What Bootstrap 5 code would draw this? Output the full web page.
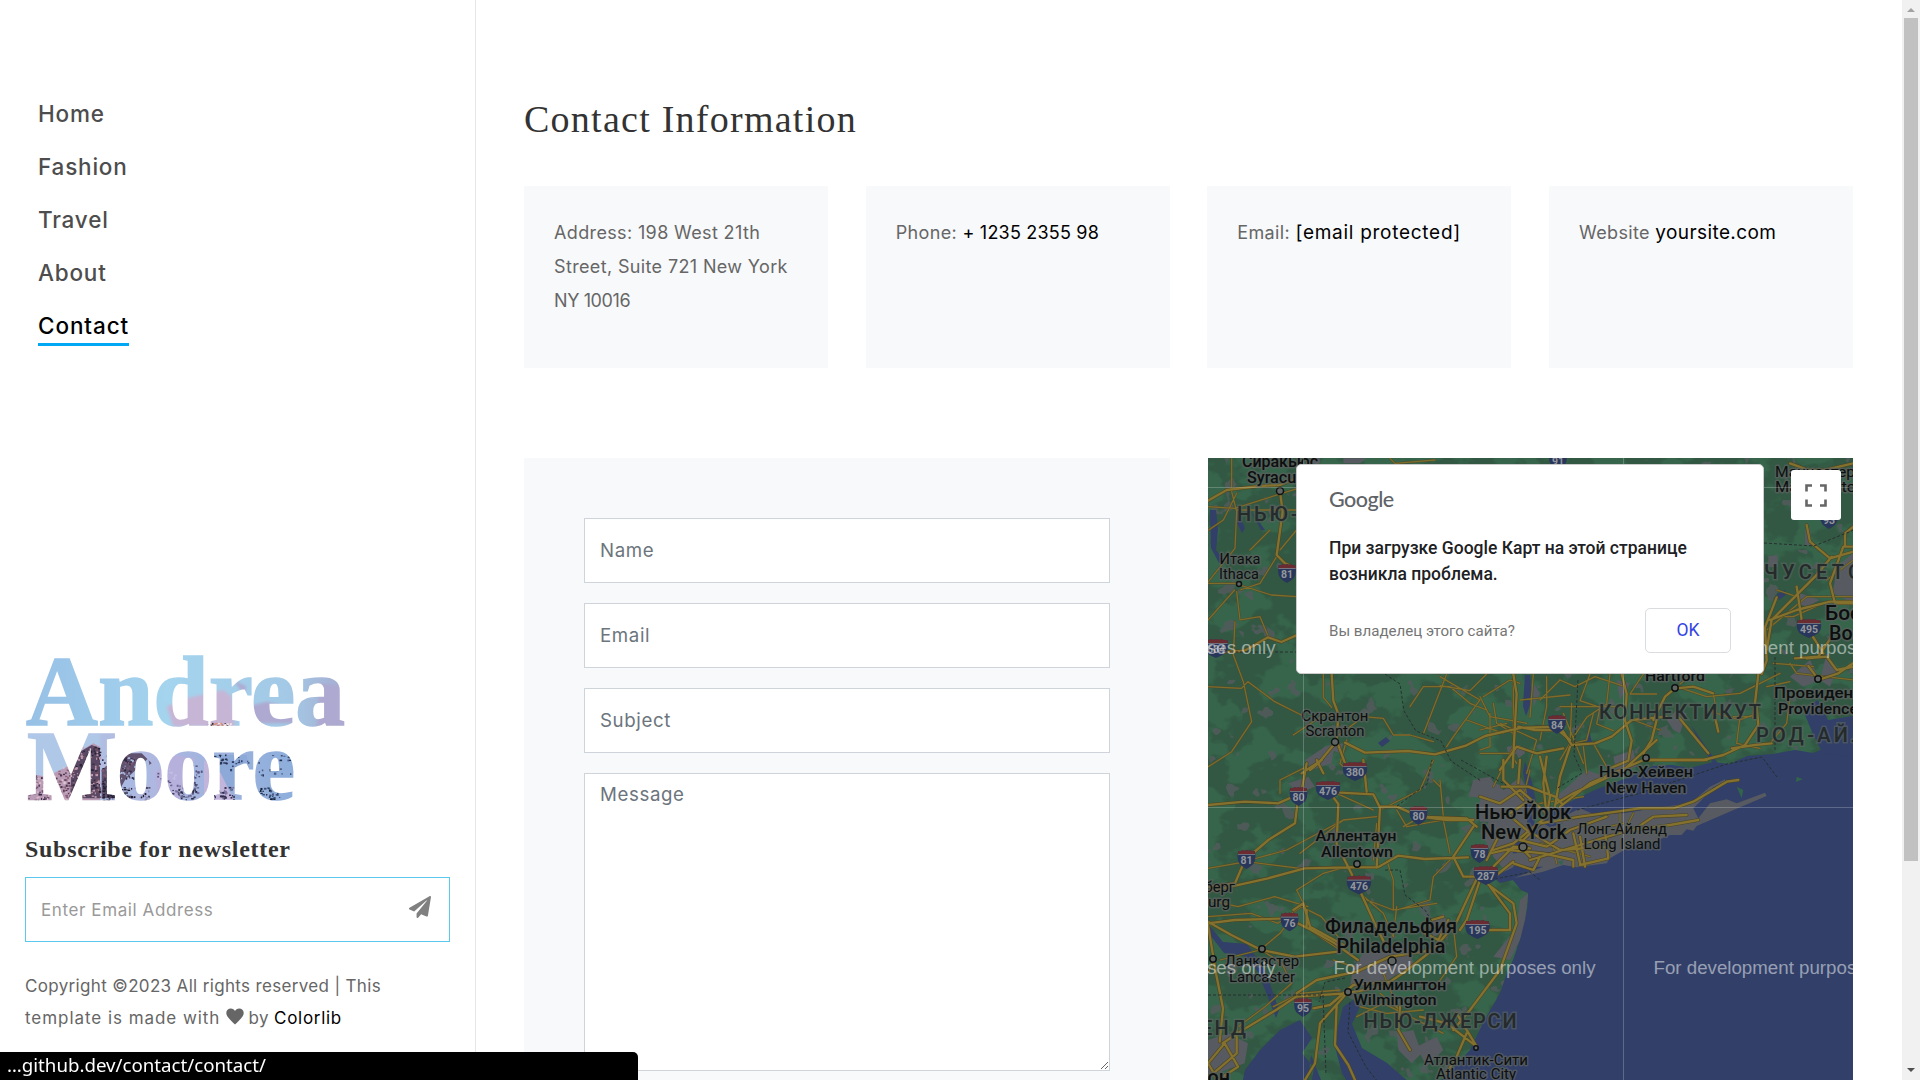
<!DOCTYPE html>
<html lang="en">
<head>
<meta charset="utf-8">
<meta name="viewport" content="width=device-width, initial-scale=1">
<title>Andrea Moore - Contact</title>
<link href="https://cdn.jsdelivr.net/npm/bootstrap@5.3.0/dist/css/bootstrap.min.css" rel="stylesheet">
<style>
body{font-family:Inter,"Liberation Sans",sans-serif;color:#666;font-size:18px;line-height:34px;background:#fff}
a{text-decoration:none;color:#000}
.side{width:476px;border-right:1px solid #e6e6e6;padding-top:87px}
.side-nav{padding-left:38px}
.side-nav li{height:53px}
.side-nav a{font-size:22.5px;letter-spacing:.8px;font-weight:500;color:#4d4d4d;line-height:53px;display:block;width:max-content}
.side-nav a.active{color:#000;position:relative;letter-spacing:.9px}
.side-nav a.active::after{content:"";position:absolute;left:0;right:0;bottom:6px;height:3px;background:#00a8f3}
.side-foot{margin-top:292px;padding:0 25px}
.logo{display:block;margin-left:-25px}
.logo text{font:700 100px "Liberation Serif",serif}
.news-title{font-family:"Liberation Serif",serif;font-size:24px;color:#333;font-weight:700;line-height:28px;letter-spacing:.7px;margin:1px 0 14px}
.news-box{height:65px;border:1px solid #5bc8ee;font-size:17px;letter-spacing:.6px;color:#999;padding:0 18px 0 15px}
.news-box svg{margin-top:-5px}
.copy{font-size:17px;line-height:32px;letter-spacing:.34px;margin:28px 0 0}
.ls-wide{letter-spacing:.95px}
.ls-mid{letter-spacing:.7px}
.ls-tight{letter-spacing:-.4px}
.page-wrap{padding:96px 49px 0 48px}
.page-title{font-family:"Liberation Serif",serif;color:#333;font-size:38px;line-height:46px;letter-spacing:1.25px;margin:0 0 44px}
.info{background:#f8f9fb;height:182px;padding:30px 30px;letter-spacing:.36px;flex:0 0 304px;white-space:nowrap}
.info a{letter-spacing:.2px}
.info a.ls-wide{font-size:19px;letter-spacing:.72px}
.info a.ls-mid{font-size:19px;letter-spacing:.4px}
.row-info{gap:37.67px;margin-bottom:90px}
.form-panel{background:#f8f9fb;padding:60px;width:646px;height:640px}
.form-panel .form-control{border-radius:0;border:1px solid #ced4da;font-size:18.7px;letter-spacing:.6px;height:65px;padding:6px 15px;margin-bottom:20px;line-height:29px}
.form-panel .form-control::placeholder{color:#6c757d;opacity:1}
.form-panel textarea.form-control{height:298px;margin-bottom:0}
.map-box{width:645px;height:640px;overflow:hidden}
.map-dlg{left:88px;top:6px;width:468px;height:210px;border-radius:5px;background:#fff;padding:19px 32px 0;font-family:Roboto,sans-serif;border:1px solid #ccc}
.g-logo{font-family:Lato,sans-serif;font-weight:500;color:#5f6368;font-size:21.5px;line-height:30px;letter-spacing:-.5px}
.g-msg{font-size:17.5px;font-weight:500;color:#202124;line-height:26px;margin-top:21px;white-space:nowrap}
.g-own{font-size:15.1px;color:#757575}
.g-foot{margin-top:21px}
.g-ok{width:86px;height:45px;border:1px solid #dadce0;border-radius:5px;color:#3244e4;font-size:17.5px;line-height:42px;text-align:center}
.full-btn{left:583px;top:12px;width:50px;height:50px;border-radius:3px;background:#fff}
.sbar{width:18px;background:#f1f1f1}
.sbar i{display:block;background:#c1c1c1;width:14px;height:843px}
.status-bar{width:638px;height:28px;background:#000;color:#fff;border-top-right-radius:5px;font:18.7px/26px "Noto Sans",sans-serif;padding-left:7px}
.map-box svg text{font-family:Roboto,sans-serif;text-anchor:middle}
.city{fill:#0d0f0f;stroke:#5a605f;stroke-opacity:.75;stroke-width:3px;paint-order:stroke;stroke-linejoin:round;font-weight:500}
.town{font-weight:400}
.state{fill:#252a2a;stroke:#5a6561;stroke-opacity:.6;stroke-width:3px;paint-order:stroke;font-weight:500}
.map-box svg .wm{font:18.7px "Liberation Sans",sans-serif;fill:#fff;fill-opacity:.5;text-anchor:start}
</style>
</head>
<body>
<div class="d-flex vh-100 overflow-hidden">
<aside class="side flex-shrink-0">
  <ul class="side-nav list-unstyled m-0">
    <li><a href="#">Home</a></li>
    <li><a href="#">Fashion</a></li>
    <li><a href="#">Travel</a></li>
    <li><a href="#">About</a></li>
    <li><a href="#" class="active">Contact</a></li>
  </ul>
  <div class="side-foot">
    <svg class="logo" width="475" height="190" viewBox="0 644 475 190">
      <defs>
        <linearGradient id="sky" x1="0" x2="1"><stop offset="0" stop-color="#95bce4"/><stop offset=".35" stop-color="#a4d4ee"/><stop offset=".6" stop-color="#a3c9e6"/><stop offset=".75" stop-color="#a7a5cb"/></linearGradient>
        <linearGradient id="sky2" x1="0" x2="1"><stop offset="0" stop-color="#b3cde8"/><stop offset=".3" stop-color="#b0b8e0"/><stop offset=".6" stop-color="#8eaedb"/></linearGradient>
        <filter id="soft" x="-30%" y="-30%" width="160%" height="160%"><feGaussianBlur stdDeviation="4"/></filter>
        <pattern id="photo" patternUnits="userSpaceOnUse" x="0" y="640" width="480" height="180">
          <g transform="scale(.33333)">
            <rect width="1440" height="270" fill="url(#sky)"/>
            <rect y="262" width="1440" height="280" fill="url(#sky2)"/>
            <path filter="url(#soft)" d="M500 200l60-25 110-25 25 20 10 90H520z" fill="#c7b5d5"/>
            <path filter="url(#soft)" d="M740 200l60-15 60 15 30 50H750zM960 130l80 10v120h-90zM700 120l40 20-10 20z" fill="#aea9d0"/>
            <path filter="url(#soft)" d="M80 280h220v60l-120 60-100 10z" fill="#b0c8e8"/>
            <path d="M80 400l60 10 60-30 30-40 50-30 20 10v165H80z" fill="#b99bb5"/>
            <path d="M215 385l25-50 35-20 25 10v150h-90z" fill="#594863"/>
            <path d="M305 390l60-50h60l30 30-70 50-20 55h-60z" fill="#60516f"/>
            <path d="M375 420l70-65 10 60-60 60h-50z" fill="#a9b9e1"/>
            <path d="M465 400l60-55 60 10-50 125h-60z" fill="#b6b1dc"/>
            <path d="M620 345l120 0 10 60-80 70z" fill="#8ca9d7"/><path d="M612 360l50 40 40 80h-90z" fill="#c2b5db"/>
            <g id="specks"></g>
          </g>
        </pattern>
      </defs>
      <g fill="url(#photo)" stroke="url(#photo)" stroke-width="1.6">
        <text x="26" y="725" textLength="319" lengthAdjust="spacingAndGlyphs">Andrea</text>
        <text x="27" y="799" textLength="268" lengthAdjust="spacingAndGlyphs">Moore</text>
      </g>
    </svg>
    <h3 class="news-title">Subscribe for newsletter</h3>
    <div class="news-box d-flex align-items-center justify-content-between"><span>Enter Email Address</span>
      <svg width="22" height="22" viewBox="0 0 512 512" fill="#808080"><path d="M476 3L12 271c-18 11-16 35 1 43l107 44L407 105c6-5 13 3 9 8L176 406v80c0 24 28 33 42 16l64-78 125 53c14 6 31-3 33-19l72-432C515 7 494-7 476 3z"/></svg>
    </div>
    <p class="copy">Copyright ©2023 All rights reserved | This<br><span class="ls-wide">template is made with</span> <svg width="18" height="17" viewBox="0 0 18 17" fill="#666" style="vertical-align:-1px"><path d="M9 16.5C6 13.500.3 9 .3 5 .3 2 2.300.4 4.800.4 6.800.4 8.200 1.500 9 3c.8-1.500 2.200-2.600 4.200-2.600 2.500 0 4.500 1.600 4.500 4.600 0 4-5.700 8.500-8.700 11.500z"/></svg> by <a href="#" class="ls-mid">Colorlib</a></p>
  </div>
</aside>
<main class="page-wrap flex-grow-1">
  <h2 class="page-title fw-normal">Contact Information</h2>
  <div class="row-info d-flex">
    <div class="info">Address: 198 West 21th<br>Street, Suite 721 New York<br><span class="ls-tight">NY 10016</span></div>
    <div class="info">Phone: <a href="#">+ 1235 2355 98</a></div>
    <div class="info">Email: <a href="#" class="ls-wide">[email protected]</a></div>
    <div class="info">Website <a href="#" class="ls-mid">yoursite.com</a></div>
  </div>
  <div class="d-flex justify-content-between">
    <form class="form-panel">
      <input class="form-control" placeholder="Name">
      <input class="form-control" placeholder="Email">
      <input class="form-control" placeholder="Subject">
      <textarea class="form-control" placeholder="Message"></textarea>
    </form>
    <div class="map-box position-relative">
      <svg width="645" height="640" viewBox="1208 458 645 640" class="d-block">
        <defs>
          <filter id="mottle" x="0" y="0" width="100%" height="100%" color-interpolation-filters="sRGB"><feTurbulence type="fractalNoise" baseFrequency=".022 .03" numOctaves="4" seed="8"/><feColorMatrix values="0 0 0 0 .212  0 0 0 0 .395  0 0 0 0 .293  0 14 0 0 -7"/></filter>
          <filter id="town" x="0" y="0" width="100%" height="100%" color-interpolation-filters="sRGB"><feTurbulence type="fractalNoise" baseFrequency=".05" numOctaves="3" seed="21"/><feColorMatrix values="0 0 0 0 .33  0 0 0 0 .355  0 0 0 0 .365  0 30 0 0 -21"/></filter>
          <symbol id="shield" viewBox="0 0 60 60" preserveAspectRatio="none"><path d="M4 6q8 3 13-3 6 4 13 0 7 4 13 0 5 6 13 3 6 26-5 40-9 8-21 14Q18 54 9 46-2 32 4 6z" fill="#28365b"/><path d="M4 6q8 3 13-3 6 4 13 0 7 4 13 0 5 6 13 3l1 10H3z" fill="#6b2c31"/><path d="M3 16h54v2H3z" fill="#8c8e91"/></symbol>
          <g id="major">
            <g transform="translate(1200 450) scale(.33333)">
              <path d="M24 152L80 120 180 108 240 105 290 85M240 125l8 60-18 130 25 25 35 15M24 610l110-8 70-40 40 14 45-20M395 672l5 80 15 40-5 80 35 95M405 880l-50 60-25 20M435 878l60 30 130-5 80 10 90-25 60-30 110-25 120-3M940 672l10 60-12 220M955 830l50 10 70 0 35 30M900 960l50-70 60 20 80-15"/>
            </g>
            <g transform="translate(1560 450) scale(.33333)">
              <path d="M0 830l35 55 70-5 50-20 60-50 105-10M185 672l15 60-5 80 20 60-10 60-60 25M290 810l-15 60-25 40 10 20 170 0 60-15 65-30 40-60-5-60M345 715l-30 25-35 70M350 715l50-5 60 20M355 800l90 110M460 780l15 65M515 895l70-10 50-5M595 672l-15 130M605 672l15-40-5-100 35-90M740 225l10 50 60 50 70-20M850 290l-40 110 15 60 55 0M630 510l80-30 100-25 70 0M620 600l15-90 70-70 60-60 50-60M710 410l15 100 40 60 25 40M880 290l-25 0 0-40 25-20M815 560l-40 60-70 5M775 688l-30-40M775 690l60-20 44-30M690 40l55 20 50 0 85-20M740 625l60-5 30 40 50-10"/>
            </g>
            <g transform="translate(1200 760) scale(.33333)">
              <path d="M24 135l110-10 100 5 50-22M295 110l-10 80-80 50-70 60-30 70-80 10M385 92l30 40-5 120 30 60 35 70 50 110 30 60M420 98l100 5 20 40-10 180M540 140l50 0 70 30 140 5 30 25M660 170l80 10 80 0M24 395l180-40 110-30 130-3 90 0 60-35 80 10 130-5M838 340l-70 150-70 80-90 70-60 40-110 20-150 10-60 40-100 60-60 40M24 490l80-10 160-5 60 30 80 45 70 50M24 485l70 40 90 45 100 20 130-15M24 495l25 150 20 100-10 100M410 735l-5 120 40 60 20 45M340 745l50-10 70-60 110-10M440 700l-80 90-15 120-30 50M290 700l60-40 120-25 100-45 130-20M320 10l-15 80M305 40l60-40M350 0l20 40M490 0l10 95M730 470l-35 10-20 40 40 20 30-60M860 370l80 60 10 60-50 140-90 120-50 60M870 380l60 80 0 50-90 0M840 360l-40 120-20 30M660 770l80 20 90 70-60-100M600 740l-5 70 35 60M800 820l-30 70-30 50M820 200l-60 90 30 60 50 0M910 0l0 60 60 60M960 0l-5 70M870 280l90-20 30 30M880 320l60-60 50 5M890 345l50-40M860 300l40-80M930 160l60-40M280 450l30-20 20 70 110 60M24 910l50-60 40 70-60 40zM110 800l0 80-70 60M320 450v50"/>
            </g>
            <g transform="translate(1480 670) scale(.33333)">
              <path d="M65 350l80 0 80 30 20 20M230 400l50-30 150-70 100-90M240 410l90-70 160-70 190 0M180 260l30 120-10 60M200 440l-10-100 10-80M0 380l60 20 60-40 80 70M270 230l-30 90-15 90M80 430l60 50 100 60 150-10M130 510l50-50 120-20 110-15 70-10 100 0 60-20 100-60 35-5M150 570l100-30 200-60 120-15 85-15M90 540l100 10 90 20 0 20M300 500l15 90M280 490l20 90M300 585l85-20-10-80M100 580l60 20 20-40M120 510l80 20 70-50 110-40M460 480l60-40 100-5M40 540l60-20 100-80"/>
            </g>
          </g>
          <g id="minor">
            <g transform="translate(1200 450) scale(.33333)">
              <path d="M95 25v100l15 60-5 110-80 100M24 170l80 5 190-60M110 130l-40 80-44 30M110 180l180 0M24 400h80l110 35 75 5M110 425l10 85 60-10 25 60M104 420l-80 90M24 710l100 5 20-20 80 60 80 40M105 515l-5 100 30 80 25 120-60 90-70 45M150 300l60-60M230 320l-50 80-60 20M240 300l50-60M370 672l0 70 25 30M410 860l80-60 60 5 30 50 50 0 70 20M630 770l40-60 80 0 60 50 50 20M740 672l-70 180M720 680l120 70-80 110-20 30M850 740l80-50 30 10M840 740l30 60 110 20M800 810l110 40M960 750l150-15M1000 672l-10 130M880 760l10 60 50 30M440 870l-20 70 20 20M860 672l-50 50-90-15M570 25l15 15 120-10M280 855l90-60 50 0M520 660l200 10"/>
            </g>
            <g transform="translate(1560 450) scale(.33333)">
              <path d="M90 672l-30 80 60 20-10 50 50 20M150 672l-10 90-60 40-40 60M0 690l45 20 60-30 90 30M35 760l-5 120-30 50M0 770l190 0M250 672l-40 60 80 0M400 672l-40 30M350 710l90 30 100-10 60-30 60-30M460 730l10 60 70 20 50-20M540 800l-10 80 70 15M580 800l-60 0M640 640l120 10M690 640l20 30 170 20M640 500l60 0 100-45M620 540l120-100 140 0M650 420l60 20M880 330l-80 60M690 740l-10 80-50 60M620 710l70-15M10 790l60 150M100 880l40 70M220 810l80 30"/>
            </g>
            <g transform="translate(1200 760) scale(.33333)">
              <path d="M240 100l0-40 80-40M410 100l110 50M700 0l-40 90-120 60M590 150l30 50 110-20M610 200l70-40M430 180l-170 90-110 30M300 325l-160-20-116 20M530 170l-100 10-130 100M530 190l-10 110M590 450l100-30 10-70 60-60M560 300l20 60 0 90M500 420l80 30 130-20M24 470l130-10 80 30 70-50 60 30 50 60M24 420l90 20 110-30 100 30M590 440l-10 90M310 430l-20-40 80-50 70-20M180 570l60-50 30-40M185 570l60 40 30 60-80 70-80 60M60 600l120-30M40 600l-16 40M480 400l70 60 30 70M730 180l20 100M720 60l10 110M400 600l60 20M330 510l90 60M220 740l80-40 120-10M480 740l80 20 110-10M540 700l70 60 120 60M700 60l20 20M550 640l50 120M470 770l80-40 120 60M760 500l10 90-70 100"/>
            </g>
            <g transform="translate(1480 670) scale(.33333)">
              <path d="M30 130v100l-30 10M100 30l0 170M200 20v90l-20 100M240 30l-60 60M60 160l110 50-30 100M0 250l90 0 20 30M150 300l-20 80M0 180l80-20M310 230l10 80M340 130l-20 80-40 10M100 230l-60 120M180 400l130-20M420 430v50M460 430l-20 40 50 10M340 480l90-20M180 520l150 40M220 530l10 50"/>
            </g>
          </g>
        </defs>
        <rect x="1208" y="458" width="645" height="640" fill="#325843"/>
        <rect x="1208" y="458" width="645" height="640" filter="url(#mottle)"/>
        <rect x="1208" y="458" width="645" height="640" filter="url(#town)" opacity=".8"/>
        <g fill="#575a60">
          <g transform="translate(1200 760) scale(.33333)"><path d="M820 60l50-10 25 40-20 25-70-5zM900 100l60-50 30 50v200l-60 50-50-60-30-60 20-60zM265 70l60-20 20 30-50 20zM24 840l60-20 60 30-10 60-110 40zM590 820l50-10 25 70-30 30-40-40zM650 860l60-30 20 40-50 50zM490 580l130-30 20 60-90 60-100 10 10-60zM690 490l40-30 20 50-50 20zM960 420l25-20-15 120-40 80-50-10 40-50 30-40z"/></g>
          <g transform="translate(1480 670) scale(.33333)"><path d="M0 325l60 20 40 60 0 50H0zM105 235l25-5 5 20-20 15zM240 370l80-70 60 20-80 50-80 40zM560 150l30-30 30 10-20 60-20-10zM400 260l60-20 10 50-60 20zM410 30l40 10-30 50z"/></g>
          <g transform="translate(1560 450) scale(.33333)"><path d="M625 318l28-3v35l-28 2zM735 240l15-5 5 50-20 0zM830 350l49-40v150l-60-30zM690 680l60-50 30 60-50 20zM800 610l30 50-20 50-30-20zM720 430l60 20-40 20-30-10z"/></g>
          <g transform="translate(1200 450) scale(.33333)"><path d="M315 930l60-40 30-10-10 60-60 20zM920 890l40-5 10 25-45 5zM430 25h70l-20 15-50 0zM330 25h30v15h-30zM1000 700l20 30-20 40zM370 890l60-10-10 30z"/></g>
        </g>
        <g fill="#313f69">
          <path d="M1853 742L1833 745 1813 753 1795 750 1773 754 1747 756 1730 764 1713 762 1690 768 1672 765 1653 766 1630 777 1597 789 1563 805 1548 812 1536 826 1530 850 1512 868 1493 877 1500 883 1513 880 1521 890 1528 893 1528 903 1525 920 1520 940 1513 960 1507 973 1500 993 1483 1023 1470 1050 1450 1072 1433 1087V1098H1853z"/>
          <path d="M1803 710l15-10 10 20 25-4v40l-30-2-10-20zM1343 1007l10-7 8 4-9 20 10 24 25 15 40 35h-70l-15-25-8-30zM1300 1020l-20 10-20 20-15 20-6 28h70l5-30-12-15 10-15zM1208 924l15 18 24 2 18 26 14 40-3 8-18-46-14-16-20-3-16-21zM1311 1055l10 25 0 18h-15z"/>
          <path d="M1525 762l7 20 5 25-5 30-5-15 0-30-4-20zM1525 675l5 0 2 25-6 16-3-10zM1210 510l6 0 2 20-2 20 8 10-5 3-8-15zM1237 510l8 18-3 5-6-12zM1250 510l15 20-4 0zM1378 743l8-6 4 4-8 6zM1777 594l8-4 2 4-8 6zM1588 725l4 18-5 0zM1691 725l15 22 18 25-2 2-20-26z"/>
        </g>
        <g transform="translate(1480 670) scale(.33333)">
          <path d="M60 560L130 520 200 450 250 440 300 415 340 432 430 430 540 412 630 400 690 350 735 328 735 335 700 352 660 395 640 415 655 445 690 400 740 388 770 400 855 368 860 378 780 412 650 468 640 482 620 478 605 495 570 495 530 512 450 530 390 565 380 580 290 592 250 585 190 605 100 625 190 590 120 590z" fill="#575a60"/>
          <path d="M770 350l20 10-5 25zM950 320l18 8-20 8zM235 575l15-4-5 16zM360 440l12-10 0 18z" fill="#31644a"/>
          <path d="M155 480l20 0 0 20-15 10zM190 460l60 0-40 12zM150 500l-30 20-10 30-12 0 12-40z" fill="#313f69"/>
        </g>
        <g fill="none" stroke-linejoin="round" stroke-linecap="round">
          <use href="#minor" stroke="#4c4a2c" stroke-width="6.500"/><use href="#minor" stroke="#7e6c2b" stroke-width="3.800"/>
          <use href="#major" stroke="#4c4425" stroke-width="10.500"/><use href="#major" stroke="#83712d" stroke-width="7"/>
        </g>
        <g fill="none" stroke="#26302f" stroke-width="1" stroke-dasharray="3 2">
          <path d="M1210 652h88M1385 674l15 10 4 27 12 20 25 10 10 20 30 20M1461 760l45 25M1578 680l-4 75 8 18-26 16M1775 657v95M1764 543l50 3 40-16M1577 810l60-16 90-30 35-7 15 20M1208 995h115l3 80M1345 978l-20 4-6 20M1350 1002l-2 30 18 35 20 25M1385 870l15 0 5 25 20 15 12 20M1397 806l30-22 5-24M1490 880l40-8 10 8"/>
        </g>
        <g id="shields"></g>
        <g fill="#606563" stroke="#0f1212" stroke-width="1.500">
          <circle cx="1280" cy="491" r="3.500"/><circle cx="1239" cy="584" r="2.500"/><circle cx="1335" cy="742" r="3.500"/><circle cx="1357" cy="864" r="3.200"/><circle cx="1523" cy="847" r="4"/><circle cx="1392" cy="961" r="4"/><circle cx="1262" cy="949" r="3.200"/><circle cx="1213" cy="959" r="3.200"/><circle cx="1348" cy="992" r="3.200"/><circle cx="1476" cy="1048" r="2.200"/><circle cx="1675" cy="688" r="3.200"/><circle cx="1646" cy="758" r="3.200"/><circle cx="1818" cy="679" r="3.200"/>
        </g>
        <g id="labels"></g>
        <g stroke="#fff" stroke-opacity=".22"><path d="M1208 487.500h645M1208 807.500h645M1303.500 458v640M1623.500 458v640" fill="none"/></g>
        <g>
          <text class="wm" x="1013.500" y="654" textLength="262">For development purposes only</text>
          <text class="wm" x="1653.500" y="654" textLength="262">For development purposes only</text>
          <text class="wm" x="1013.500" y="973.500" textLength="262">For development purposes only</text>
          <text class="wm" x="1333.500" y="973.500" textLength="262">For development purposes only</text>
          <text class="wm" x="1653.500" y="973.500" textLength="262">For development purposes only</text>
        </g>
      </svg>
      <div class="map-dlg position-absolute">
        <div class="g-logo">Google</div>
        <div class="g-msg">При загрузке Google Карт на этой странице<br>возникла проблема.</div>
        <div class="g-foot d-flex justify-content-between align-items-center">
          <span class="g-own">Вы владелец этого сайта?</span>
          <div class="g-ok">OK</div>
        </div>
      </div>
      <div class="full-btn position-absolute d-flex align-items-center justify-content-center">
        <svg width="22" height="23" viewBox="0 0 22 23" fill="none" stroke="#666" stroke-width="2.600"><path d="M1.500 7.500V1.500H7M15 1.500h5.500V7.500M20.500 15.500V21.500H15M7 21.500H1.500v-6"/></svg>
      </div>
    </div>
  </div>
</main>
<div class="sbar flex-shrink-0 d-flex flex-column align-items-center justify-content-between">
  <div class="d-flex flex-column align-items-center">
    <svg width="14" height="18" viewBox="0 0 14 18" class="d-block"><path d="M3 12l4-4 4 4z" fill="#a3a3a3"/></svg>
    <i></i>
  </div>
  <svg width="14" height="18" viewBox="0 0 14 18" class="d-block"><path d="M3 6l4 4 4-4z" fill="#505050"/></svg>
</div>
</div>
<div class="status-bar position-fixed bottom-0 start-0">…github.dev/contact/contact/</div>
<script>
const NS = 'http://www.w3.org/2000/svg';
function add(parent, tag, attrs, text) {
  const e = document.createElementNS(NS, tag);
  for (const k in attrs) e.setAttribute(k, attrs[k]);
  if (text) e.textContent = text;
  parent.appendChild(e);
}
// Map labels: class, text, centre x, baseline y, width, font size
[
  ['city','Сиракьюс',1280,466.5,76,16],['city','Syracuse',1280,482.5,66,16],
  ['state','НЬЮ-ЙОРК',1300,521,126,20],
  ['city town','Итака',1240,563.5,41,15],['city town','Ithaca',1239,578.5,40,15],
  ['city town','Скрантон',1335,720.5,67,15],['city town','Scranton',1335,735.5,59,15],
  ['city','Hartford',1675,680.5,60,15],
  ['city town','Манчестер',1815,477,80,15],['city town','Manchester',1818,492,86,15],
  ['state','МАССАЧУСЕТС',1767,579,188,20],
  ['city','Бостон',1860,620,70,20],['city','Boston',1860,640,62,20],
  ['city','Провиденс',1818,697.5,88,15],['city','Providence',1818,714,80,15],
  ['state','КОННЕКТИКУТ',1680,719,162,20],['state','РОД-АЙЛЕНД',1836,742,160,20],
  ['city','Нью-Хейвен',1646,776.5,94,15.5],['city','New Haven',1646,793,81,15.5],
  ['city','Нью-Йорк',1523,818.5,96,20],['city','New York',1524,838.5,86,20],
  ['city town','Лонг-Айленд',1622,834,90,15],['city town','Long Island',1622,849,77,15],
  ['city','Аллентаун',1356,840.5,81,15],['city','Allentown',1357,856.5,72,15],
  ['city town','Гаррисберг',1196,891.5,78,15],['city town','Harrisburg',1194,907,72,15],
  ['city','Филадельфия',1391,932.5,132,20],['city','Philadelphia',1391,952.5,109,20],
  ['city town','Ланкастер',1262,966,74,15],['city town','Lancaster',1262,981.5,66,15],
  ['city','Уилмингтон',1400,989.5,93,15.5],['city','Wilmington',1395,1005,83,15.5],
  ['state','НЬЮ-ДЖЕРСИ',1440,1028,153,20],['state','МЭРИЛЕНД',1182,1035,128,20],
  ['city town','Атлантик-Сити',1476,1064.5,104,15],['city town','Atlantic City',1476,1079,80,15],
  ['city','Вашингтон',1179,1084,102,20]
].forEach(([c, t, x, y, w, s]) => add(labels, 'text', {class: c, x, y, 'font-size': s, textLength: w, lengthAdjust: c === 'state' ? 'spacing' : 'spacingAndGlyphs'}, t));
// Highway shields: number, centre x, centre y
[['81',1287,573],['684',1216,648],['84',1557,724],['380',1355,771],['93',1829,519],['495',1809,628],['91',1558,460],['80',1298.5,796],['476',1328,790],['80',1418.5,815],['78',1479.5,853],['287',1486,875],['81',1246.5,859],['476',1359,884.5],['76',1289.5,921.5],['195',1477.5,929],['95',1303,1007]
].forEach(([n, x, y]) => {
  const w = n.length > 2 ? 26 : 19;
  add(shields, 'use', {href: '#shield', x: x - w / 2, y: y - 10, width: w, height: 20});
  add(shields, 'text', {x, y: y + 5, 'font-size': 10.5, 'font-weight': 700, fill: '#94979b'}, n);
});
// Rock and snow grain on the mountain photo behind the logo: x, y, width, height, count, colours
let seed = 7;
const rnd = () => (seed = seed * 16807 % 2147483647) / 2147483647;
[[85,400,60,80,60,['#3d2f4c','#d9b9c6','#6b5570']],[140,380,80,95,90,['#4a3048','#e0c3d0','#8a6078']],[215,320,85,150,200,['#2a2238','#6d4c5e','#c09aae']],
 [305,345,100,70,110,['#2d2841','#a9b7dd','#7b5b74']],[305,410,50,70,90,['#211d31','#3c3550']],[340,440,110,40,70,['#211d31','#8f8bb5']],
 [470,380,60,60,18,['#5c5580','#c4bfe4']],[500,430,90,50,50,['#2b2a45','#6f6a95']],[560,360,45,100,18,['#54507a']],[620,342,60,30,24,['#2b3352']],
 [620,440,80,40,40,['#2f2d4c','#7770a0']],[690,350,55,50,16,['#33406a']],[750,345,130,60,24,['#22304f','#4a5e8c']],[755,440,90,40,40,['#16243a','#3d4f78']],[620,248,70,12,40,['#2c1c24','#d98a70','#f0e0e4']]
].forEach(([x, y, w, h, n, cols]) => {
  for (let i = 0; i < n; i++) add(specks, 'rect', {x: x + rnd() * w, y: y + rnd() * h, width: 3 + rnd() * 5, height: 3 + rnd() * 4, fill: cols[Math.floor(rnd() * cols.length)]});
});
</script>
<script src="https://cdn.jsdelivr.net/npm/bootstrap@5.3.0/dist/js/bootstrap.bundle.min.js"></script>
</body>
</html>
